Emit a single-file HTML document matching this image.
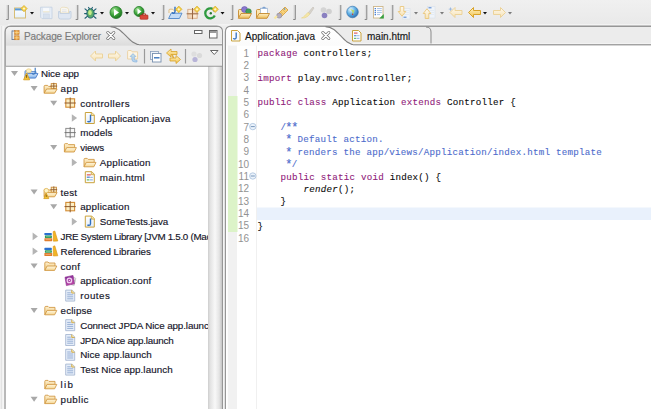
<!DOCTYPE html>
<html><head><meta charset="utf-8">
<style>
*{margin:0;padding:0;box-sizing:border-box}
html,body{width:651px;height:410px;overflow:hidden}
body{position:relative;background:#ededed;font-family:"Liberation Sans",sans-serif;font-size:10px;color:#111}
.a{position:absolute}
.t{position:absolute;white-space:nowrap;font-size:9.8px;line-height:12px;color:#141428;-webkit-text-stroke:0.15px #141428}
.tab{position:absolute;white-space:nowrap;font-size:10px;line-height:12px;color:#161616;-webkit-text-stroke:0.15px #161616}
.code{position:absolute;left:257.5px;font-family:"Liberation Mono",monospace;font-size:9.2px;letter-spacing:0.23px;line-height:12px;white-space:pre;color:#0a0a0a;-webkit-text-stroke:0.1px}
.code i{font-style:italic}
.ln{position:absolute;font-family:"Liberation Sans",sans-serif;font-size:10px;line-height:12px;color:#929292;text-align:right;width:30px;left:219px}
.k{color:#90217a}
.c{color:#4d6ccc}
.ast{font-weight:normal;display:inline-block;width:5.52px;text-align:center;transform:scale(1.3);transform-origin:50% 35%}
svg{position:absolute;left:0;top:0}
</style></head>
<body>
<svg width="651" height="410" style="position:absolute;left:0;top:0">
<defs>
 <linearGradient id="gTB" x1="0" y1="0" x2="0" y2="1"><stop offset="0" stop-color="#f0f0f0"/><stop offset="1" stop-color="#e9e9e9"/></linearGradient>
 <linearGradient id="gTabL" x1="0" y1="0" x2="0" y2="1"><stop offset="0" stop-color="#f4f4f4"/><stop offset="1" stop-color="#dcdcdc"/></linearGradient>
 <linearGradient id="gTabR" x1="0" y1="0" x2="0" y2="1"><stop offset="0" stop-color="#f0f0f0"/><stop offset="1" stop-color="#e8e8e8"/></linearGradient>
 <linearGradient id="gTabE" x1="0" y1="0" x2="0" y2="1"><stop offset="0" stop-color="#ffffff"/><stop offset="1" stop-color="#fbfbfb"/></linearGradient>
 <linearGradient id="gScroll" x1="0" y1="0" x2="1" y2="0"><stop offset="0" stop-color="#cdcdcd"/><stop offset="0.15" stop-color="#e2e2e2"/><stop offset="0.5" stop-color="#f8f8f8"/><stop offset="0.8" stop-color="#e4e4e4"/><stop offset="1" stop-color="#c4c4c4"/></linearGradient>
</defs>
<rect x="0" y="0" width="651" height="25" fill="url(#gTB)"/>
<rect x="8" y="24.3" width="651" height="1" fill="#f7f7f7"/>
<!-- left panel -->
<rect x="0" y="26" width="5" height="390" fill="#efefef"/><rect x="1" y="26" width="1" height="390" fill="#e3e3e3"/><rect x="2.5" y="26" width="1.5" height="390" fill="#f6f6f6"/>
<path d="M5.1 420V32Q5.1 26.2 10.9 26.2H216.7Q222.5 26.2 222.5 32V420Z" fill="#ececec" stroke="#969696" stroke-width="1.4"/>
<path d="M6 46V32.2Q6 27 11.2 27H216.8Q222 27 222 32.2V46Z" fill="url(#gTabR)"/>
<path d="M6 46V32.2Q6 27 11.2 27H111.5C124 27 128 44.6 141 44.6H222V46Z" fill="url(#gTabL)"/>
<path d="M110.5 26.6C123.5 26.6 128 44.8 141 44.8H222" fill="none" stroke="#808080" stroke-width="1.1"/><rect x="139" y="44" width="83" height="1.6" fill="#a2a2a2"/><rect x="139" y="43.2" width="83" height="0.8" fill="#f6f6f6"/>
<rect x="6" y="45.6" width="216" height="20.4" fill="#ececec"/>
<rect x="6" y="65.8" width="216" height="1.1" fill="#8a8a8a"/>
<rect x="5.8" y="66.7" width="202.2" height="350" fill="#ffffff"/>
<rect x="208" y="66.7" width="14" height="350" fill="url(#gScroll)"/>
<rect x="223" y="30" width="2.5" height="390" fill="#f4f4f4"/>
<!-- editor panel -->
<path d="M225.5 420V32Q225.5 26.2 231.3 26.2H660V420Z" fill="#ececec" stroke="#969696" stroke-width="1.4"/>
<path d="M226 46V32.2Q226 27 231.2 27H326.5C339 27 342.5 44.6 355.5 44.6H652V46Z" fill="url(#gTabE)"/>
<path d="M325.5 26.6C338.5 26.6 342.5 44.8 355.5 44.8H652" fill="none" stroke="#808080" stroke-width="1.1"/><rect x="353" y="44" width="300" height="1.6" fill="#a2a2a2"/><rect x="353" y="43.2" width="300" height="0.8" fill="#f6f6f6"/>
<path d="M426 27Q431 27 431 32V43.5" fill="none" stroke="#8a8a8a" stroke-width="1"/>
<rect x="226" y="45.6" width="430" height="370" fill="#ffffff"/>
<rect x="227.8" y="45.6" width="9.2" height="370" fill="#f1f1f1"/>
<rect x="228" y="96" width="9.5" height="136" fill="#dcf3c8"/>
<rect x="256" y="45.6" width="1" height="370" fill="#f0f0f0"/>
<rect x="257" y="207.5" width="400" height="12.5" fill="#e9f1fc"/>
<rect x="0" y="409" width="651" height="1" fill="#ffffff"/>
</svg>

<svg width="0" height="0" style="position:absolute">
<defs>
 <linearGradient id="gFold" x1="0" y1="0" x2="0" y2="1"><stop offset="0" stop-color="#fff8e2"/><stop offset="1" stop-color="#f5d590"/></linearGradient>
 <linearGradient id="gFoldB" x1="0" y1="0" x2="0" y2="1"><stop offset="0" stop-color="#fdf0d0"/><stop offset="1" stop-color="#f0c878"/></linearGradient>
 <linearGradient id="gBlueF" x1="0" y1="0" x2="0" y2="1"><stop offset="0" stop-color="#d6e8fb"/><stop offset="1" stop-color="#7fb0ea"/></linearGradient>
 <linearGradient id="gDoc" x1="0" y1="0" x2="0" y2="1"><stop offset="0" stop-color="#ffffff"/><stop offset="1" stop-color="#e3eefb"/></linearGradient>
 <radialGradient id="gGreen" cx="0.4" cy="0.35" r="0.7"><stop offset="0" stop-color="#8fdc8a"/><stop offset="0.6" stop-color="#3ca23a"/><stop offset="1" stop-color="#1f7a22"/></radialGradient>
 <radialGradient id="gGlobe" cx="0.4" cy="0.35" r="0.7"><stop offset="0" stop-color="#b9e2f7"/><stop offset="0.6" stop-color="#3a8fd0"/><stop offset="1" stop-color="#1c5d9e"/></radialGradient>
 <radialGradient id="gPurp" cx="0.4" cy="0.35" r="0.7"><stop offset="0" stop-color="#c8bcf0"/><stop offset="1" stop-color="#6a58b8"/></radialGradient>
 <radialGradient id="gGrn2" cx="0.4" cy="0.35" r="0.7"><stop offset="0" stop-color="#a8e0a0"/><stop offset="1" stop-color="#2f8f3a"/></radialGradient>
 <linearGradient id="gConf" x1="0" y1="0" x2="0.4" y2="1"><stop offset="0" stop-color="#7a2a9a"/><stop offset="1" stop-color="#c04aa8"/></linearGradient>
 <radialGradient id="gGray" cx="0.4" cy="0.35" r="0.7"><stop offset="0" stop-color="#f0f0f0"/><stop offset="1" stop-color="#c4c4c4"/></radialGradient>

 
 

 

 
 

 
 

 
 
 

 

 

 
</defs>
</svg>
<svg width="651" height="410" style="position:absolute;left:0;top:0;overflow:hidden"><defs><clipPath id="treeClip"><rect x="6" y="67" width="202" height="343"/></clipPath></defs><g clip-path="url(#treeClip)">
<g transform="translate(6.50,65.60)"><path d="M4.5 5.5H11.5L8 10.5Z" fill="#a8a8a8"/></g>
<g transform="translate(23.00,65.60)">
  <path d="M2 12.5V6Q2 5 3 5H5.5L6.5 6H13V8" fill="#b9d4f4" stroke="#5a86c8" stroke-width="0.9"/>
  <path d="M2 12.5L4.5 8H15L12.5 12.5Z" fill="url(#gBlueF)" stroke="#4a7cc8" stroke-width="0.9" stroke-linejoin="round"/>
  <path d="M12.2 2.2V7Q12.2 8.6 10.6 8.6Q9.6 8.6 9 7.6" fill="none" stroke="#3a78c0" stroke-width="1.1"/>
  <ellipse cx="5.8" cy="5.2" rx="2.6" ry="2" fill="#fbefc4" stroke="#e6c46a" stroke-width="0.6"/>
  <path d="M3.6 7.4L0.6 14.2H6.6Z" fill="#f3c33a" stroke="#d39a1c" stroke-width="0.8" stroke-linejoin="round"/>
  <path d="M3.6 9.4V12.2" stroke="#5b3e0c" stroke-width="0.8"/>
 </g>
<g transform="translate(26.10,80.40)"><path d="M4.5 5.5H11.5L8 10.5Z" fill="#a8a8a8"/></g>
<g transform="translate(42.60,80.40)">
  <path d="M1.5 12.5V6Q1.5 5 2.5 5H5L6 6H12.5V8.5" fill="url(#gFoldB)" stroke="#d09640" stroke-width="0.9"/>
  <rect x="8.6" y="3.2" width="5.2" height="5" fill="#fcefc4" stroke="#c98a3a" stroke-width="0.9"/>
  <path d="M11.2 2.4V9M7.8 5.7H14.6" stroke="#8f5a2e" stroke-width="0.9"/>
  <path d="M1.5 12.8L4 8.6H14.5L12 12.8Z" fill="url(#gFold)" stroke="#d09640" stroke-width="0.9" stroke-linejoin="round"/>
 </g>
<g transform="translate(45.70,95.20)"><path d="M4.5 5.5H11.5L8 10.5Z" fill="#a8a8a8"/></g>
<g transform="translate(62.20,95.20)">
  <rect x="3.6" y="3.6" width="8.8" height="8.4" fill="#fcefc4" stroke="#d38c34" stroke-width="1.1"/>
  <path d="M8 2.3V13.5M2.3 7.8H13.6" stroke="#8f5a2e" stroke-width="1"/>
 </g>
<g transform="translate(66.30,110.00)"><path d="M5.5 4.2V11.8L10.8 8Z" fill="#b4b4b4"/></g>
<g transform="translate(81.80,110.00)">
  <path d="M3.5 2.5H10L12.5 5V13.5H3.5Z" fill="url(#gDoc)" stroke="#c9a23c" stroke-width="1" stroke-linejoin="round"/>
  <path d="M9.5 2.5V5.5H12.5" fill="#f4e2a8" stroke="#c9a23c" stroke-width="0.8"/>
  <path d="M8.7 4.8V10.2Q8.7 11.8 7.2 11.8Q6.2 11.8 5.8 11" fill="none" stroke="#2f6fbf" stroke-width="1.4"/>
 </g>
<g transform="translate(62.20,124.80)">
  <rect x="3.6" y="3.6" width="8.8" height="8.4" fill="#f7f7f7" stroke="#8e8e8e" stroke-width="1"/>
  <path d="M8 2.3V13.5M2.3 7.8H13.6" stroke="#6e6e6e" stroke-width="0.9"/>
 </g>
<g transform="translate(45.70,139.60)"><path d="M4.5 5.5H11.5L8 10.5Z" fill="#a8a8a8"/></g>
<g transform="translate(62.20,139.60)">
  <path d="M2.2 12.4V5Q2.2 4 3.2 4H5.4L6.4 5H12.4V8" fill="url(#gFoldB)" stroke="#d09640" stroke-width="0.85"/>
  <path d="M2.2 12.4L4.5 8H14.2L12 12.4Z" fill="url(#gFold)" stroke="#d09640" stroke-width="0.85" stroke-linejoin="round"/>
 </g>
<g transform="translate(66.30,154.40)"><path d="M5.5 4.2V11.8L10.8 8Z" fill="#b4b4b4"/></g>
<g transform="translate(81.80,154.40)">
  <path d="M2.2 12.4V5Q2.2 4 3.2 4H5.4L6.4 5H12.4V8" fill="url(#gFoldB)" stroke="#d09640" stroke-width="0.85"/>
  <path d="M2.2 12.4L4.5 8H14.2L12 12.4Z" fill="url(#gFold)" stroke="#d09640" stroke-width="0.85" stroke-linejoin="round"/>
 </g>
<g transform="translate(81.80,169.20)">
  <path d="M3.5 2.5H10L12.5 5V13.5H3.5Z" fill="#fbfcfe" stroke="#c9a23c" stroke-width="1" stroke-linejoin="round"/>
  <path d="M9.5 2.5V5.5H12.5" fill="#f4e2a8" stroke="#c9a23c" stroke-width="0.8"/>
  <rect x="5" y="5" width="4" height="1.3" fill="#e06060"/>
  <rect x="5" y="7.3" width="3" height="1.5" fill="#6a9ad8"/><rect x="8.4" y="7.6" width="2.6" height="1.2" fill="#9bbce6"/>
  <rect x="5" y="10" width="2.6" height="1.3" fill="#6cc06c"/><rect x="8" y="10" width="3" height="1.3" fill="#9bbce6"/>
 </g>
<g transform="translate(26.10,184.00)"><path d="M4.5 5.5H11.5L8 10.5Z" fill="#a8a8a8"/></g>
<g transform="translate(42.60,184.00)">
  <path d="M1.5 12.5V6Q1.5 5 2.5 5H5L6 6H12.5V8.5" fill="url(#gFoldB)" stroke="#d09640" stroke-width="0.9"/>
  <rect x="8.6" y="3.2" width="5.2" height="5" fill="#fcefc4" stroke="#c98a3a" stroke-width="0.9"/>
  <path d="M11.2 2.4V9M7.8 5.7H14.6" stroke="#8f5a2e" stroke-width="0.9"/>
  <path d="M1.5 12.8L4 8.6H14.5L12 12.8Z" fill="url(#gFold)" stroke="#d09640" stroke-width="0.9" stroke-linejoin="round"/>
  <circle cx="3.8" cy="6.6" r="2.2" fill="#fdf3c8" stroke="#e0b64e" stroke-width="0.6"/>
  <path d="M3.6 9.2L1.2 14.6H6.2Z" fill="#f2c23a" stroke="#d39a1c" stroke-width="0.8" stroke-linejoin="round"/>
  <path d="M3.7 10.8V13" stroke="#6b4a10" stroke-width="0.7"/>
 </g>
<g transform="translate(45.70,198.80)"><path d="M4.5 5.5H11.5L8 10.5Z" fill="#a8a8a8"/></g>
<g transform="translate(62.20,198.80)">
  <rect x="3.6" y="3.6" width="8.8" height="8.4" fill="#fcefc4" stroke="#d38c34" stroke-width="1.1"/>
  <path d="M8 2.3V13.5M2.3 7.8H13.6" stroke="#8f5a2e" stroke-width="1"/>
 </g>
<g transform="translate(66.30,213.60)"><path d="M5.5 4.2V11.8L10.8 8Z" fill="#b4b4b4"/></g>
<g transform="translate(81.80,213.60)">
  <path d="M3.5 2.5H10L12.5 5V13.5H3.5Z" fill="url(#gDoc)" stroke="#c9a23c" stroke-width="1" stroke-linejoin="round"/>
  <path d="M9.5 2.5V5.5H12.5" fill="#f4e2a8" stroke="#c9a23c" stroke-width="0.8"/>
  <path d="M8.7 4.8V10.2Q8.7 11.8 7.2 11.8Q6.2 11.8 5.8 11" fill="none" stroke="#2f6fbf" stroke-width="1.4"/>
 </g>
<g transform="translate(27.10,228.40)"><path d="M5.5 4.2V11.8L10.8 8Z" fill="#b4b4b4"/></g>
<g transform="translate(42.60,228.40)">
  <rect x="1.8" y="4.6" width="7.4" height="2.2" rx="0.6" fill="#2a6fd0"/>
  <rect x="2.3" y="7" width="7" height="2.6" rx="0.6" fill="#2f9a5a"/>
  <rect x="1.8" y="9.8" width="7.8" height="3" rx="0.6" fill="#e07b2a"/>
  <path d="M3 11.2H8.2" stroke="#f5c39a" stroke-width="0.6"/><path d="M3.4 8.3H8" stroke="#9ad7ad" stroke-width="0.6"/>
  <path d="M10.6 3.2L12.2 2.6L15.2 12.6L10.8 12.8Z" fill="#f2b426" stroke="#d89412" stroke-width="0.6" stroke-linejoin="round"/>
 </g>
<g transform="translate(27.10,243.20)"><path d="M5.5 4.2V11.8L10.8 8Z" fill="#b4b4b4"/></g>
<g transform="translate(42.60,243.20)">
  <rect x="1.8" y="4.6" width="7.4" height="2.2" rx="0.6" fill="#2a6fd0"/>
  <rect x="2.3" y="7" width="7" height="2.6" rx="0.6" fill="#2f9a5a"/>
  <rect x="1.8" y="9.8" width="7.8" height="3" rx="0.6" fill="#e07b2a"/>
  <path d="M3 11.2H8.2" stroke="#f5c39a" stroke-width="0.6"/><path d="M3.4 8.3H8" stroke="#9ad7ad" stroke-width="0.6"/>
  <path d="M10.6 3.2L12.2 2.6L15.2 12.6L10.8 12.8Z" fill="#f2b426" stroke="#d89412" stroke-width="0.6" stroke-linejoin="round"/>
 </g>
<g transform="translate(26.10,258.00)"><path d="M4.5 5.5H11.5L8 10.5Z" fill="#a8a8a8"/></g>
<g transform="translate(42.60,258.00)">
  <path d="M2.2 12.4V5Q2.2 4 3.2 4H5.4L6.4 5H12.4V8" fill="url(#gFoldB)" stroke="#d09640" stroke-width="0.85"/>
  <path d="M2.2 12.4L4.5 8H14.2L12 12.4Z" fill="url(#gFold)" stroke="#d09640" stroke-width="0.85" stroke-linejoin="round"/>
 </g>
<g transform="translate(62.20,272.80)">
  <path d="M10.5 4L13.6 5.5L12 12.6L9 12" fill="#e4e4e4" stroke="#b0b0b0" stroke-width="0.6"/>
  <path d="M11 7.5L13 8.2M10.6 9.5L12.6 10.2" stroke="#a0a0a0" stroke-width="0.6"/>
  <path d="M2.8 4.4L10.8 2.6L12.2 11L4.2 12.8Z" fill="url(#gConf)" stroke="#8a2a8a" stroke-width="0.6"/>
  <circle cx="7.2" cy="7.6" r="2.2" fill="none" stroke="#f0d0f0" stroke-width="1.3"/>
  <circle cx="7.2" cy="7.6" r="0.7" fill="#f0d0f0"/>
 </g>
<g transform="translate(62.20,287.60)">
  <path d="M3.5 2.5H10L12.5 5V13.5H3.5Z" fill="#e6eef9" stroke="#a9b9d2" stroke-width="0.9" stroke-linejoin="round"/>
  <path d="M9.5 2.5V5.5H12.5" fill="#f4e2a8" stroke="#c9a23c" stroke-width="0.8"/>
  <path d="M5 5.2H8.6M5 7.2H11M5 9.2H11M5 11.2H11" stroke="#8ea8d0" stroke-width="0.9"/>
 </g>
<g transform="translate(26.10,302.40)"><path d="M4.5 5.5H11.5L8 10.5Z" fill="#a8a8a8"/></g>
<g transform="translate(42.60,302.40)">
  <path d="M2.2 12.4V5Q2.2 4 3.2 4H5.4L6.4 5H12.4V8" fill="url(#gFoldB)" stroke="#d09640" stroke-width="0.85"/>
  <path d="M2.2 12.4L4.5 8H14.2L12 12.4Z" fill="url(#gFold)" stroke="#d09640" stroke-width="0.85" stroke-linejoin="round"/>
 </g>
<g transform="translate(62.20,317.20)">
  <path d="M3.5 2.5H10L12.5 5V13.5H3.5Z" fill="#e6eef9" stroke="#a9b9d2" stroke-width="0.9" stroke-linejoin="round"/>
  <path d="M9.5 2.5V5.5H12.5" fill="#f4e2a8" stroke="#c9a23c" stroke-width="0.8"/>
  <path d="M5 5.2H8.6M5 7.2H11M5 9.2H11M5 11.2H11" stroke="#8ea8d0" stroke-width="0.9"/>
 </g>
<g transform="translate(62.20,332.00)">
  <path d="M3.5 2.5H10L12.5 5V13.5H3.5Z" fill="#e6eef9" stroke="#a9b9d2" stroke-width="0.9" stroke-linejoin="round"/>
  <path d="M9.5 2.5V5.5H12.5" fill="#f4e2a8" stroke="#c9a23c" stroke-width="0.8"/>
  <path d="M5 5.2H8.6M5 7.2H11M5 9.2H11M5 11.2H11" stroke="#8ea8d0" stroke-width="0.9"/>
 </g>
<g transform="translate(62.20,346.80)">
  <path d="M3.5 2.5H10L12.5 5V13.5H3.5Z" fill="#e6eef9" stroke="#a9b9d2" stroke-width="0.9" stroke-linejoin="round"/>
  <path d="M9.5 2.5V5.5H12.5" fill="#f4e2a8" stroke="#c9a23c" stroke-width="0.8"/>
  <path d="M5 5.2H8.6M5 7.2H11M5 9.2H11M5 11.2H11" stroke="#8ea8d0" stroke-width="0.9"/>
 </g>
<g transform="translate(62.20,361.60)">
  <path d="M3.5 2.5H10L12.5 5V13.5H3.5Z" fill="#e6eef9" stroke="#a9b9d2" stroke-width="0.9" stroke-linejoin="round"/>
  <path d="M9.5 2.5V5.5H12.5" fill="#f4e2a8" stroke="#c9a23c" stroke-width="0.8"/>
  <path d="M5 5.2H8.6M5 7.2H11M5 9.2H11M5 11.2H11" stroke="#8ea8d0" stroke-width="0.9"/>
 </g>
<g transform="translate(42.60,376.40)">
  <path d="M2.2 12.4V5Q2.2 4 3.2 4H5.4L6.4 5H12.4V8" fill="url(#gFoldB)" stroke="#d09640" stroke-width="0.85"/>
  <path d="M2.2 12.4L4.5 8H14.2L12 12.4Z" fill="url(#gFold)" stroke="#d09640" stroke-width="0.85" stroke-linejoin="round"/>
 </g>
<g transform="translate(26.10,391.20)"><path d="M4.5 5.5H11.5L8 10.5Z" fill="#a8a8a8"/></g>
<g transform="translate(42.60,391.20)">
  <path d="M2.2 12.4V5Q2.2 4 3.2 4H5.4L6.4 5H12.4V8" fill="url(#gFoldB)" stroke="#d09640" stroke-width="0.85"/>
  <path d="M2.2 12.4L4.5 8H14.2L12 12.4Z" fill="url(#gFold)" stroke="#d09640" stroke-width="0.85" stroke-linejoin="round"/>
 </g>
</g></svg><svg width="651" height="410" style="position:absolute;left:0;top:0"><defs><radialGradient id="tGreen" cx="0.35" cy="0.3" r="0.75"><stop offset="0" stop-color="#a6e39a"/><stop offset="0.55" stop-color="#3da53b"/><stop offset="1" stop-color="#1d6e1f"/></radialGradient><radialGradient id="tGlobe" cx="0.35" cy="0.3" r="0.75"><stop offset="0" stop-color="#e6f6ff"/><stop offset="0.5" stop-color="#62b2e6"/><stop offset="1" stop-color="#2a6cb0"/></radialGradient><linearGradient id="tFold" x1="0" y1="0" x2="0" y2="1"><stop offset="0" stop-color="#fdeec4"/><stop offset="1" stop-color="#eebf5c"/></linearGradient><linearGradient id="tArrow" x1="0" y1="0" x2="0" y2="1"><stop offset="0" stop-color="#fff4c8"/><stop offset="1" stop-color="#f2c24a"/></linearGradient><linearGradient id="tArrowP" x1="0" y1="0" x2="0" y2="1"><stop offset="0" stop-color="#fffaf0"/><stop offset="1" stop-color="#f6e2b4"/></linearGradient><linearGradient id="tWin" x1="0" y1="0" x2="0" y2="1"><stop offset="0" stop-color="#ffffff"/><stop offset="1" stop-color="#e4f0fb"/></linearGradient></defs>
<path d="M6.3 5V19.3H8.5V5" fill="#dedede"/><path d="M8.3 5V19.5H6.2" fill="none" stroke="#7c7c7c" stroke-width="0.9"/>
<path d="M75.8 5V19.3H78V5" fill="#dedede"/><path d="M77.8 5V19.5H75.7" fill="none" stroke="#7c7c7c" stroke-width="0.9"/>
<path d="M161.8 5V19.3H164V5" fill="#dedede"/><path d="M163.8 5V19.5H161.7" fill="none" stroke="#7c7c7c" stroke-width="0.9"/>
<path d="M230.8 5V19.3H233V5" fill="#dedede"/><path d="M232.8 5V19.5H230.7" fill="none" stroke="#7c7c7c" stroke-width="0.9"/>
<path d="M293.3 5V19.3H295.5V5" fill="#dedede"/><path d="M295.3 5V19.5H293.2" fill="none" stroke="#7c7c7c" stroke-width="0.9"/>
<path d="M338.8 5V19.3H341V5" fill="#dedede"/><path d="M340.8 5V19.5H338.7" fill="none" stroke="#7c7c7c" stroke-width="0.9"/>
<path d="M364.8 5V19.3H367V5" fill="#dedede"/><path d="M366.8 5V19.5H364.7" fill="none" stroke="#7c7c7c" stroke-width="0.9"/>
<path d="M390.8 5V19.3H393V5" fill="#dedede"/><path d="M392.8 5V19.5H390.7" fill="none" stroke="#7c7c7c" stroke-width="0.9"/>
<rect x="14.5" y="8" width="11" height="10" fill="url(#tWin)" stroke="#d4b868" stroke-width="0.9"/><rect x="15" y="8.4" width="9" height="2" fill="#5a9ad8"/>
<path d="M24 5.4L27.2 8.6L24 11.8L20.8 8.6Z" fill="#f3cf48" stroke="#d2a41e" stroke-width="0.6"/><path d="M24 7.2L25.4 8.6L24 10L22.6 8.6Z" fill="#fff6cc"/>
<path d="M30 12H34L32 14.6Z" fill="#111"/>
<path d="M40.6 7.2H52V18.6H42L40.6 17.2Z" fill="#e6edf6" stroke="#c6d3e3" stroke-width="0.9"/><rect x="42.8" y="7.8" width="7" height="4.2" fill="#f7f9fc" stroke="#d6e0ec" stroke-width="0.5"/><path d="M43 11.8H49.6" stroke="#efe2b8" stroke-width="0.7"/><rect x="43.6" y="14" width="5.6" height="4.2" fill="#d8e2ee" stroke="#c6d3e3" stroke-width="0.5"/>
<path d="M60.5 13V8.5Q61.5 6.8 64 7.2L67.5 7.8L68.5 9.5V13Z" fill="#f8f6f0" stroke="#e6d8b0" stroke-width="0.7"/><path d="M58.5 11.5V17Q58.5 19 60.5 19H69Q71 19 71 17V11.5H69.5V13.5H60V11.5Z" fill="#dfe7f2" stroke="#c2cfe0" stroke-width="0.9" stroke-linejoin="round"/><path d="M62 9.8H66.5M62 11.5H66.5" stroke="#d8dce4" stroke-width="0.6"/>
<g stroke="#1f5f72" stroke-width="1.1" fill="none" stroke-linecap="round"><path d="M85 8.8L88.2 11.5M96 8.8L92.8 11.5M84.6 13.6H88M96.4 13.6H93M85 18.2L88.2 15.6M96 18.2L92.8 15.6M88.6 7.4L89.8 9.6M92.4 7.4L91.2 9.6"/></g><ellipse cx="90.5" cy="13.4" rx="3.7" ry="4.7" fill="#5aaa6a" stroke="#1f5f72" stroke-width="0.9"/><ellipse cx="90" cy="12.6" rx="1.8" ry="2.6" fill="#c8ec8a"/>
<path d="M100 12H104L102 14.6Z" fill="#111"/>
<circle cx="116" cy="12.5" r="6" fill="url(#tGreen)" stroke="#1f7a24" stroke-width="0.8"/><path d="M114 9V16L119 12.5Z" fill="#ffffff"/>
<path d="M125 12H129L127 14.6Z" fill="#111"/>
<circle cx="139" cy="11.5" r="5" fill="url(#tGreen)" stroke="#1f7a24" stroke-width="0.8"/><path d="M137.5 8.6V14.4L141.5 11.5Z" fill="#ffffff"/><rect x="140" y="15" width="8" height="4.3" rx="0.8" fill="#d8483a" stroke="#a82a20" stroke-width="0.6"/><path d="M142.5 15V13.8H145.5V15" fill="none" stroke="#a82a20" stroke-width="0.8"/>
<path d="M151 12H155L153 14.6Z" fill="#111"/>
<path d="M169 13V10.2Q169 9.2 170 9.2H172.5L173.5 10.2H178.5V13" fill="#fdf6e6" stroke="#d6b070" stroke-width="0.8"/><path d="M168.6 18.5L171.2 13.2H182L179.4 18.5Z" fill="#c4dcf6" stroke="#4d86c8" stroke-width="0.9" stroke-linejoin="round"/><path d="M175 6.8V11.6Q175 13.2 173.5 13.2Q172.4 13.2 172 12.3" fill="none" stroke="#2f6fbf" stroke-width="1.4"/>
<path d="M178.8 6.1000000000000005L182.0 9.3L178.8 12.5L175.60000000000002 9.3Z" fill="#f3cf48" stroke="#d2a41e" stroke-width="0.6"/><path d="M178.8 7.9L180.20000000000002 9.3L178.8 10.700000000000001L177.4 9.3Z" fill="#fff6cc"/>
<rect x="187.8" y="9.3" width="9.4" height="9" fill="#f3d6b8" stroke="#d6a882" stroke-width="0.8"/><rect x="188.6" y="10.1" width="3.2" height="3.2" fill="#fbebd8"/><rect x="193.2" y="14.5" width="3.2" height="3" fill="#fbebd8"/><path d="M192.5 8V19.3M186.6 13.8H198.4" stroke="#9a6844" stroke-width="1"/>
<path d="M197 6.1000000000000005L200.2 9.3L197 12.5L193.8 9.3Z" fill="#f3cf48" stroke="#d2a41e" stroke-width="0.6"/><path d="M197 7.9L198.4 9.3L197 10.700000000000001L195.6 9.3Z" fill="#fff6cc"/>
<path d="M214.8 11.2A5 5 0 1 0 214.8 15.4" fill="none" stroke="#2f9a40" stroke-width="2.3"/><circle cx="210.8" cy="13.3" r="1.2" fill="#2a7a34"/>
<path d="M215.2 6.1000000000000005L218.39999999999998 9.3L215.2 12.5L212.0 9.3Z" fill="#f3cf48" stroke="#d2a41e" stroke-width="0.6"/><path d="M215.2 7.9L216.6 9.3L215.2 10.700000000000001L213.79999999999998 9.3Z" fill="#fff6cc"/>
<path d="M220.5 12H224.5L222.5 14.6Z" fill="#111"/>
<path d="M238.5 17.5V10.5Q238.5 9.5 239.5 9.5H242L243 10.5H248V12" fill="#fbe6b0" stroke="#c68a2c" stroke-width="0.9"/><circle cx="244.5" cy="9.5" r="3" fill="#8a78d0" stroke="#5a48a0" stroke-width="0.5"/><circle cx="248.5" cy="11.5" r="2.8" fill="#44a05a" stroke="#2a7a3a" stroke-width="0.5"/><path d="M238.3 18.3L241 13.5H251.5L249 18.3Z" fill="url(#tFold)" stroke="#c68a2c" stroke-width="0.9" stroke-linejoin="round"/>
<path d="M256.5 17.5V10.5Q256.5 9.5 257.5 9.5H260L261 10.5H266V12" fill="#fbe6b0" stroke="#c68a2c" stroke-width="0.9"/><rect x="260.5" y="8.2" width="7" height="5.5" fill="#ffffff" stroke="#8aa6c8" stroke-width="0.6"/><path d="M261 8.5H267L264 6.5Z" fill="#7aa0d0"/><path d="M256.3 18.3L259 13.5H269.5L267 18.3Z" fill="url(#tFold)" stroke="#c68a2c" stroke-width="0.9" stroke-linejoin="round"/>
<path d="M278 14L285 7L288 10L281 17Z" fill="#f7d27a" stroke="#d49a38" stroke-width="0.8"/><path d="M280.5 11.5L283.5 14.5M282.5 9.5L285.5 12.5" stroke="#e0a848" stroke-width="0.6"/><circle cx="279.2" cy="15.6" r="2.5" fill="#b4aec0" stroke="#8a8494" stroke-width="0.6"/><path d="M274.5 18.5L277 16" stroke="#f8e8a0" stroke-width="2"/><circle cx="284.5" cy="9" r="0.8" fill="#4a8ad0"/>
<path d="M308 13L313 7L314 8L310 14Z" fill="#d8d4cc" stroke="#c4c0b8" stroke-width="0.6"/><path d="M303 17.5Q302 17.5 301.5 18Q305 18.5 307.5 16.5L310 14L308 12.5Q305 15 303 17.5Z" fill="#f4e6a8" stroke="#e8d488" stroke-width="0.6"/>
<circle cx="323.5" cy="10" r="2.8" fill="#d4d4d4"/><circle cx="329" cy="11.5" r="2.8" fill="#d0d0d0"/><circle cx="324.5" cy="15.5" r="2.8" fill="#8a80c0"/>
<circle cx="352.5" cy="12" r="5.8" fill="url(#tGlobe)" stroke="#2a6aa8" stroke-width="0.6"/><path d="M350 9L352 11L353 14.5L354.5 10.5Z" fill="#b8d868"/><circle cx="352.6" cy="14.2" r="0.7" fill="#d03030"/>
<rect x="373.5" y="6.5" width="9.5" height="11.5" fill="#ffffff" stroke="#cdb68a" stroke-width="0.9"/><path d="M374.6 8.6H376M374.6 10.6H376M374.6 12.6H376M374.6 14.6H376" stroke="#4a80d0" stroke-width="1.1"/><path d="M377 8.6H381.8M377 10.6H381.8M377 12.6H381.8M377 14.6H380" stroke="#8eb0e0" stroke-width="0.8"/><path d="M383.8 14V18.6H379.2Z" fill="#38a040"/>
<rect x="402.5" y="8.5" width="7.5" height="10.5" fill="#f0f4f9" stroke="#d8e0ea" stroke-width="0.6"/><path d="M404 10.5H409M404 12.5H409M404 14.5H409" stroke="#dde6f0" stroke-width="0.7"/><path d="M403.5 17.2H406.5" stroke="#5a8ad0" stroke-width="1.1"/><path d="M400.2 6.5H403.8V11.5H405.8L402 16.2L398.2 11.5H400.2Z" fill="url(#tArrowP)" stroke="#eac67a" stroke-width="0.9" stroke-linejoin="round"/>
<path d="M414 12H418L416 14.6Z" fill="#7a7a7a"/>
<rect x="427.5" y="6.5" width="7.5" height="11.5" fill="#f0f4f9" stroke="#d8e0ea" stroke-width="0.6"/><path d="M429 10.5H434M429 12.5H434M429 14.5H434" stroke="#dde6f0" stroke-width="0.7"/><path d="M428.5 7.8H431.5" stroke="#5a8ad0" stroke-width="1.1"/><path d="M425.2 18.5H428.8V13.5H430.8L427 8.8L423.2 13.5H425.2Z" fill="url(#tArrowP)" stroke="#eac67a" stroke-width="0.9" stroke-linejoin="round"/>
<path d="M440 12H444L442 14.6Z" fill="#7a7a7a"/>
<path d="M450.0 12.5L455.0 7.5V10.5H462.0V14.5H455.0V17.5Z" fill="url(#tArrowP)" stroke="#ecd39a" stroke-width="1" stroke-linejoin="round"/>
<path d="M450.5 7L451.3 8.7L453 9L451.3 9.6L450.5 11.2L449.7 9.6L448 9L449.7 8.7Z" fill="#9ab8e0"/>
<path d="M468.5 12.5L473.5 7.5V10.5H480.5V14.5H473.5V17.5Z" fill="url(#tArrow)" stroke="#d8a228" stroke-width="1" stroke-linejoin="round"/>
<path d="M483 12H487L485 14.6Z" fill="#111"/>
<path d="M505.5 12.5L500.5 7.5V10.5H493.5V14.5H500.5V17.5Z" fill="url(#tArrowP)" stroke="#ecd39a" stroke-width="1" stroke-linejoin="round"/>
<path d="M508 12H512L510 14.6Z" fill="#7a7a7a"/>
<path d="M12 30.5V40M12 31H14.5M12 39.5H14.5" stroke="#6a7a9a" stroke-width="0.9" fill="none"/><rect x="14.5" y="30.5" width="4.6" height="4" fill="#e8a040" stroke="#c07020" stroke-width="0.5"/><rect x="14.5" y="35.8" width="4.6" height="4" fill="#e8a040" stroke="#c07020" stroke-width="0.5"/><path d="M16.8 30.5V34.5M14.5 32.5H19.1M16.8 35.8V39.8M14.5 37.8H19.1" stroke="#fce0a0" stroke-width="0.6"/>
<path d="M107.8 32.5L113.8 38.5M113.8 32.5L107.8 38.5" stroke="#6a6a6a" stroke-width="3.0" stroke-linecap="round"/><path d="M107.8 32.5L113.8 38.5M113.8 32.5L107.8 38.5" stroke="#fff" stroke-width="1.7" stroke-linecap="round"/>
<path d="M322.8 32.5L328.8 38.5M328.8 32.5L322.8 38.5" stroke="#6a6a6a" stroke-width="3.0" stroke-linecap="round"/><path d="M322.8 32.5L328.8 38.5M328.8 32.5L322.8 38.5" stroke="#fff" stroke-width="1.7" stroke-linecap="round"/>
<rect x="194.5" y="30.5" width="7.5" height="3" fill="#fff" stroke="#666" stroke-width="1"/>
<rect x="209.5" y="30.5" width="7.5" height="7.5" fill="#fff" stroke="#666" stroke-width="1"/><rect x="210" y="31" width="6.5" height="2" fill="#9a9a9a"/>
<path d="M90.5 56.0L95.5 51.0V54.0H102.5V58.0H95.5V61.0Z" fill="url(#tArrowP)" stroke="#ecd39a" stroke-width="1" stroke-linejoin="round"/>
<path d="M120.5 56.0L115.5 51.0V54.0H108.5V58.0H115.5V61.0Z" fill="url(#tArrowP)" stroke="#ecd39a" stroke-width="1" stroke-linejoin="round"/>
<path d="M127.6 59V51.5Q127.6 50.5 128.6 50.5H131.2L132.2 51.8H137.6V59Z" fill="#fdf5e4" stroke="#ead0a0" stroke-width="0.9"/><path d="M133 53.6L136 56.6H134.4V59Q134.4 60.2 135.6 60.2H137V62H135Q131.8 62 131.8 59V56.6H130Z" fill="#b4d2ee" stroke="#8ab4dc" stroke-width="0.6" stroke-linejoin="round"/><path d="M133 55L134.3 56.3H131.8Z" fill="#d6ecd0"/>
<rect x="143.9" y="49" width="1.2" height="14.5" fill="#9a9a9a"/>
<rect x="184.9" y="49" width="1.2" height="14.5" fill="#9a9a9a"/>
<rect x="150.5" y="51.5" width="8" height="8" fill="#eef3f9" stroke="#8aa0bc" stroke-width="0.8"/><rect x="152.5" y="53.5" width="8.5" height="8.5" fill="#ffffff" stroke="#7890b0" stroke-width="0.9"/><path d="M154 57.8H159.5" stroke="#2a6ab8" stroke-width="1.3"/>
<path d="M172 54.5L174 59" stroke="#e0b040" stroke-width="1.6"/><path d="M166.5 53L171 49V51.5H177V54.5H171V57Z" fill="url(#tArrow)" stroke="#d8a228" stroke-width="0.8" stroke-linejoin="round"/><path d="M180.5 59.5L176 55.5V58H170V61H176V63.5Z" fill="url(#tArrow)" stroke="#d8a228" stroke-width="0.8" stroke-linejoin="round"/>
<circle cx="194" cy="54" r="2.6" fill="#dedede"/><circle cx="199.5" cy="55.5" r="2.6" fill="#dadada"/><circle cx="195" cy="59.5" r="2.6" fill="#b8b4d8"/>
<path d="M210.5 50.5H218L214.25 54.5Z" fill="#fff" stroke="#555" stroke-width="0.9" stroke-linejoin="round"/>
<path d="M231.5 30.5H237.5L240 33V41H231.5Z" fill="#f8fbff" stroke="#c9a23c" stroke-width="1" stroke-linejoin="round"/><path d="M236.2 32.5V37.5Q236.2 39 234.7 39Q233.7 39 233.3 38.2" fill="none" stroke="#2f6fbf" stroke-width="1.3"/>
<path d="M352.5 30.5H358.5L361 33V41H352.5Z" fill="#fbfcfe" stroke="#c9a23c" stroke-width="1" stroke-linejoin="round"/><rect x="354" y="32.5" width="3.5" height="1.2" fill="#e06060"/><rect x="354" y="35" width="2.5" height="1.3" fill="#6a9ad8"/><rect x="357" y="35.2" width="2.5" height="1" fill="#9bbce6"/><rect x="354" y="37.8" width="2.2" height="1.2" fill="#6cc06c"/><rect x="356.6" y="37.8" width="2.8" height="1.2" fill="#9bbce6"/>
<circle cx="252.8" cy="126.60" r="3.2" fill="#eaf2fb" stroke="#a8c0dc" stroke-width="0.8"/><path d="M250.8 126.60H254.8" stroke="#6a8ab0" stroke-width="0.9"/>
<circle cx="252.8" cy="176.00" r="3.2" fill="#eaf2fb" stroke="#a8c0dc" stroke-width="0.8"/><path d="M250.8 176.00H254.8" stroke="#6a8ab0" stroke-width="0.9"/>
</svg>

<div class="tab" style="left:24px;top:31px;color:#7b7b7b;-webkit-text-stroke:0.15px #7b7b7b;letter-spacing:-0.13px">Package Explorer</div>
<div class="tab" style="left:245px;top:31px">Application.java</div>
<div class="tab" style="left:367px;top:31px">main.html</div>

<div class="a" style="left:6px;top:67px;width:202px;height:343px;overflow:hidden">
<div class="t" style="left:35.0px;top:1.10px;letter-spacing:-0.086px">Nice app</div>
<div class="t" style="left:54.6px;top:15.90px;letter-spacing:0.500px">app</div>
<div class="t" style="left:74.2px;top:30.70px;letter-spacing:0.420px">controllers</div>
<div class="t" style="left:93.8px;top:45.50px;letter-spacing:0.133px">Application.java</div>
<div class="t" style="left:74.2px;top:60.30px;letter-spacing:0.140px">models</div>
<div class="t" style="left:74.2px;top:75.10px;letter-spacing:-0.150px">views</div>
<div class="t" style="left:93.8px;top:89.90px;letter-spacing:0.280px">Application</div>
<div class="t" style="left:93.8px;top:104.70px;letter-spacing:0.300px">main.html</div>
<div class="t" style="left:54.6px;top:119.50px;letter-spacing:0.200px">test</div>
<div class="t" style="left:74.2px;top:134.30px;letter-spacing:0.230px">application</div>
<div class="t" style="left:93.8px;top:149.10px;letter-spacing:-0.054px">SomeTests.java</div>
<div class="t" style="left:54.6px;top:163.90px;letter-spacing:-0.300px">JRE System Library [JVM 1.5.0 (Mac OS X Default)]</div>
<div class="t" style="left:54.6px;top:178.70px;letter-spacing:-0.037px">Referenced Libraries</div>
<div class="t" style="left:54.6px;top:193.50px;letter-spacing:0.300px">conf</div>
<div class="t" style="left:74.2px;top:208.30px;letter-spacing:0.200px">application.conf</div>
<div class="t" style="left:74.2px;top:223.10px;letter-spacing:0.500px">routes</div>
<div class="t" style="left:54.6px;top:237.90px;letter-spacing:0.150px">eclipse</div>
<div class="t" style="left:74.2px;top:252.70px;letter-spacing:-0.100px">Connect JPDA Nice app.launch</div>
<div class="t" style="left:74.2px;top:267.50px;letter-spacing:-0.211px">JPDA Nice app.launch</div>
<div class="t" style="left:74.2px;top:282.30px;letter-spacing:0.086px">Nice app.launch</div>
<div class="t" style="left:74.2px;top:297.10px;letter-spacing:0.079px">Test Nice app.launch</div>
<div class="t" style="left:54.6px;top:311.90px;letter-spacing:1.250px">lib</div>
<div class="t" style="left:54.6px;top:326.70px;letter-spacing:0.440px">public</div>
</div>
<div class="ln" style="top:47.50px">1</div>
<div class="code" style="top:48.00px"><span class="k">package</span> controllers;</div>
<div class="ln" style="top:59.85px">2</div>
<div class="ln" style="top:72.20px">3</div>
<div class="code" style="top:72.70px"><span class="k">import</span> play.mvc.Controller;</div>
<div class="ln" style="top:84.55px">4</div>
<div class="ln" style="top:96.90px">5</div>
<div class="code" style="top:97.40px"><span class="k">public</span> <span class="k">class</span> Application <span class="k">extends</span> Controller {</div>
<div class="ln" style="top:109.25px">6</div>
<div class="ln" style="top:121.60px">7</div>
<div class="code" style="top:122.10px">    <span class="c">/<b class="ast">*</b><b class="ast">*</b></span></div>
<div class="ln" style="top:133.95px">8</div>
<div class="code" style="top:134.45px"><span class="c">     <b class="ast">*</b> Default action.</span></div>
<div class="ln" style="top:146.30px">9</div>
<div class="code" style="top:146.80px"><span class="c">     <b class="ast">*</b> renders the app/views/Application/index.html template</span></div>
<div class="ln" style="top:158.65px">10</div>
<div class="code" style="top:159.15px"><span class="c">     <b class="ast">*</b>/</span></div>
<div class="ln" style="top:171.00px">11</div>
<div class="code" style="top:171.50px">    <span class="k">public</span> <span class="k">static</span> <span class="k">void</span> index() {</div>
<div class="ln" style="top:183.35px">12</div>
<div class="code" style="top:183.85px">        <i>render</i>();</div>
<div class="ln" style="top:195.70px">13</div>
<div class="code" style="top:196.20px">    }</div>
<div class="ln" style="top:208.05px">14</div>
<div class="ln" style="top:220.40px">15</div>
<div class="code" style="top:220.90px">}</div>
<div class="ln" style="top:232.75px">16</div>
</body></html>
